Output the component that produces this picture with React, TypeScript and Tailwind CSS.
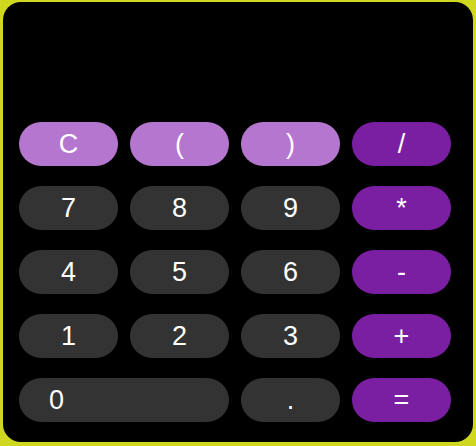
import React from "react";

const light = "bg-[#b576d0]";
const dark = "bg-[#333333]";
const op = "bg-[#7b1fa2]";

type B = { t: string; c: string; span?: boolean };

const keys: B[] = [
  { t: "C", c: light },
  { t: "(", c: light },
  { t: ")", c: light },
  { t: "/", c: op },
  { t: "7", c: dark },
  { t: "8", c: dark },
  { t: "9", c: dark },
  { t: "*", c: op },
  { t: "4", c: dark },
  { t: "5", c: dark },
  { t: "6", c: dark },
  { t: "-", c: op },
  { t: "1", c: dark },
  { t: "2", c: dark },
  { t: "3", c: dark },
  { t: "+", c: op },
  { t: "0", c: dark, span: true },
  { t: ".", c: dark },
  { t: "=", c: op },
];

export default function App() {
  return (
    <div className="w-[476px] h-[446px] bg-[#cfd71e] pt-[2px] pl-[3px]" style={{ fontFamily: '"Liberation Sans", Arial, sans-serif' }}>
      <div className="w-[470px] h-[440px] bg-black rounded-[18px] flex flex-col pl-[16px]">
        <div className="h-[120px]" />
        <div className="grid grid-cols-[99px_99px_99px_99px] gap-x-[12px] gap-y-[20px]">
          {keys.map((k, i) => (
            <div
              key={i}
              className={`${k.c} h-[44px] rounded-full text-white text-[27px] leading-none flex items-center ${
                k.span ? "col-span-2 justify-start pl-[30px]" : "justify-center"
              }`}
            >
              {k.t}
            </div>
          ))}
        </div>
      </div>
    </div>
  );
}
